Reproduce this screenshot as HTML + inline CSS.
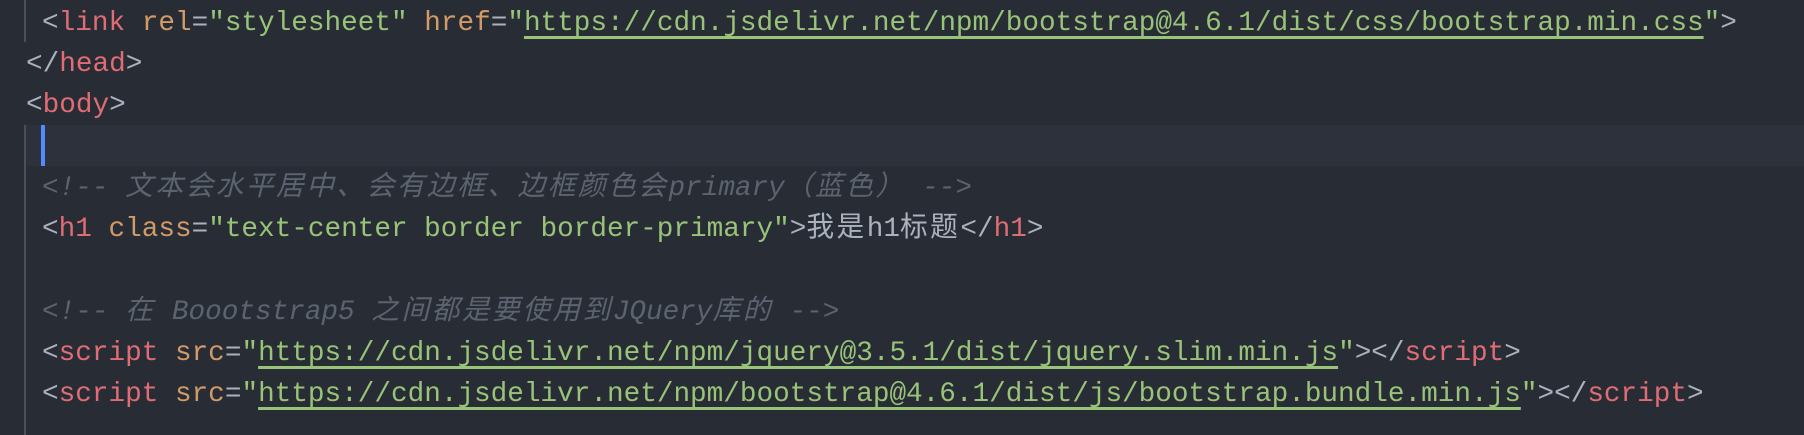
<!DOCTYPE html>
<html><head><meta charset="utf-8"><style>
html,body{margin:0;padding:0;background:#282c34;width:1804px;height:435px;overflow:hidden}
.l{position:absolute;left:0;height:41px;line-height:41px;white-space:pre;font-family:"Liberation Mono","Noto Sans CJK SC",monospace;font-size:27.7px;color:#abb2bf}
.t{color:#e06c75}.a{color:#d19a66}.s{color:#98c379}.p{color:#abb2bf}
.u{text-decoration:underline;text-decoration-color:#98c379;text-decoration-thickness:3px;text-underline-offset:6px}
.c{color:#5c6370;font-style:italic}
.k{letter-spacing:2.5px}
.g{position:absolute;left:24px;width:2px;background:#4b5058}
</style></head><body>
<div style="position:absolute;left:26px;top:125px;width:1778px;height:41px;background:#2c313c"></div>
<div class="g" style="top:0;height:42px"></div>
<div class="g" style="top:125px;height:310px"></div>
<div style="position:absolute;left:41px;top:125px;width:4px;height:41px;background:#528bff"></div>
<div class="l" style="top:3px;left:42px"><span class="p">&lt;</span><span class="t">link</span> <span class="a">rel</span><span class="p">=</span><span class="s">"stylesheet"</span> <span class="a">href</span><span class="p">=</span><span class="s">"<span class="u">https://cdn.jsdelivr.net/npm/bootstrap@4.6.1/dist/css/bootstrap.min.css</span>"</span><span class="p">&gt;</span></div>
<div class="l" style="top:44px;left:26px"><span class="p">&lt;/</span><span class="t">head</span><span class="p">&gt;</span></div>
<div class="l" style="top:85px;left:26px"><span class="p">&lt;</span><span class="t">body</span><span class="p">&gt;</span></div>
<div class="l c" style="top:168px;left:42px">&lt;!-- <span class="k">文本会水平居中、会有边框、边框颜色会</span>primary<span class="k">（蓝色）</span> --&gt;</div>
<div class="l" style="top:209px;left:42px"><span class="p">&lt;</span><span class="t">h1</span> <span class="a">class</span><span class="p">=</span><span class="s">"text-center border border-primary"</span><span class="p">&gt;</span><span class="k">我是</span>h1<span class="k">标题</span><span class="p">&lt;/</span><span class="t">h1</span><span class="p">&gt;</span></div>
<div class="l c" style="top:292px;left:42px">&lt;!-- <span class="k">在</span> Boootstrap5 <span class="k">之间都是要使用到</span>JQuery<span class="k">库的</span> --&gt;</div>
<div class="l" style="top:333px;left:42px"><span class="p">&lt;</span><span class="t">script</span> <span class="a">src</span><span class="p">=</span><span class="s">"<span class="u">https://cdn.jsdelivr.net/npm/jquery@3.5.1/dist/jquery.slim.min.js</span>"</span><span class="p">&gt;&lt;/</span><span class="t">script</span><span class="p">&gt;</span></div>
<div class="l" style="top:374px;left:42px"><span class="p">&lt;</span><span class="t">script</span> <span class="a">src</span><span class="p">=</span><span class="s">"<span class="u">https://cdn.jsdelivr.net/npm/bootstrap@4.6.1/dist/js/bootstrap.bundle.min.js</span>"</span><span class="p">&gt;&lt;/</span><span class="t">script</span><span class="p">&gt;</span></div>
</body></html>
